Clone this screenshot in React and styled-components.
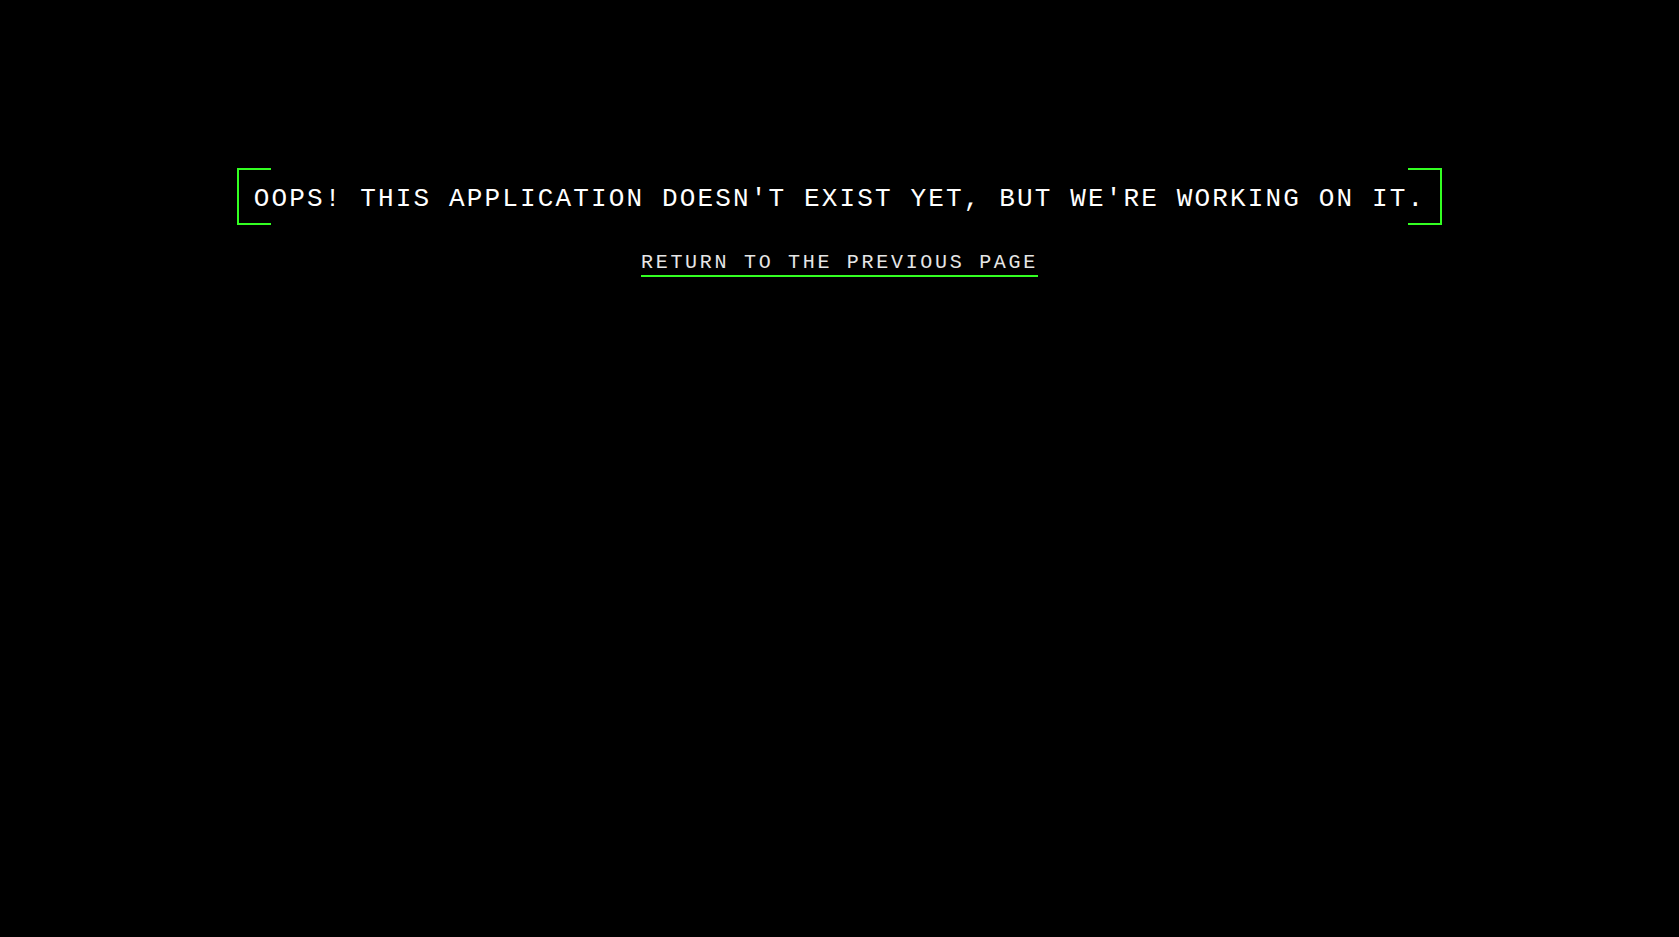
import React from "react";
import styled, { createGlobalStyle } from "styled-components";

const Global = createGlobalStyle`
  html, body {
    margin: 0;
    padding: 0;
    background: #000;
  }
  body {
    font-family: "Liberation Mono", "DejaVu Sans Mono", monospace;
    color: #fff;
  }
`;

const Page = styled.div`
  min-height: 100vh;
  background: #000;
  display: flex;
  flex-direction: column;
  align-items: center;
  padding-top: 168px;
  box-sizing: border-box;
`;

const Bracketed = styled.div`
  position: relative;
  height: 57px;
  padding: 4px 17px 0;
  display: flex;
  align-items: center;
  box-sizing: border-box;

  &::before,
  &::after {
    content: "";
    position: absolute;
    top: 0;
    bottom: 0;
    width: 32px;
    border: 2px solid #33ff22;
  }
  &::before {
    left: 0;
    border-right: none;
  }
  &::after {
    right: 0;
    border-left: none;
  }
`;

const Title = styled.h1`
  margin: 0;
  font-size: 26px;
  font-weight: 400;
  letter-spacing: 2.15px;
  line-height: 1;
  white-space: nowrap;
  color: #fff;
`;

const BackLink = styled.a`
  margin-top: 28px;
  font-size: 20px;
  letter-spacing: 2.7px;
  line-height: 1;
  color: #e6e6e6;
  text-decoration: none;
  padding-bottom: 2px;
  border-bottom: 2px solid #33ff22;
  cursor: pointer;
`;

export default () => {
  return (
    <>
      <Global />
      <Page>
        <Bracketed>
          <Title>OOPS! THIS APPLICATION DOESN'T EXIST YET, BUT WE'RE WORKING ON IT.</Title>
        </Bracketed>
        <BackLink href="#">RETURN TO THE PREVIOUS PAGE</BackLink>
      </Page>
    </>
  );
};
